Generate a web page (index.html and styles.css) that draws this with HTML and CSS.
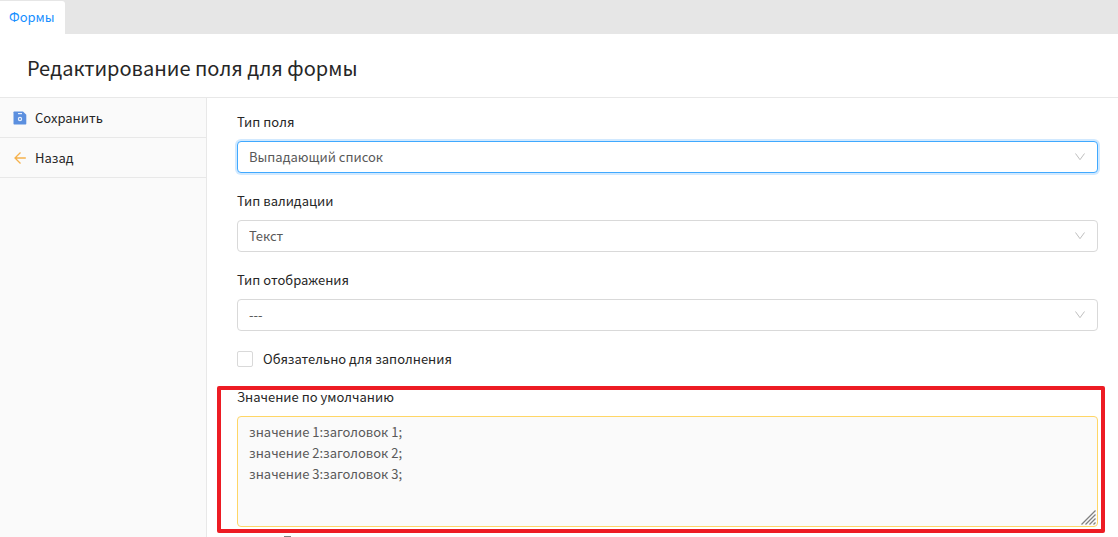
FILE: index.html
```html
<!DOCTYPE html>
<html lang="ru">
<head>
<meta charset="utf-8">
<meta name="viewport" content="width=device-width, initial-scale=1">
<title>Редактирование поля для формы</title>
<link rel="stylesheet" href="styles.css">
</head>
<body>
<nav class="tabs"><a class="tab" href="#forms">Формы</a></nav>
<header class="header"><h1 class="title">Редактирование поля для формы</h1></header>
<div class="layout">
  <aside class="sidebar">
    <button class="action" type="button">
      <svg class="action-icon" viewBox="0 0 14 14" aria-hidden="true">
        <path fill="#5b8fdf" d="M1.2 0.5H10L13.3 3.8V12.8Q13.3 13.5 12.6 13.5H1.2Q0.5 13.5 0.5 12.8V1.2Q0.5 0.5 1.2 0.5Z"/>
        <path fill="#e6effc" d="M5 2H9V3.2H5Z"/>
        <circle cx="7" cy="8" r="1.6" fill="none" stroke="#e6effc" stroke-width="1.2"/>
      </svg>
      Сохранить
    </button>
    <button class="action" type="button">
      <svg class="action-icon" viewBox="0 0 14 14" aria-hidden="true">
        <path fill="none" stroke="#f5b14c" stroke-width="1.3" d="M7.5 1.5L2 7L7.5 12.5M2 7H12.8"/>
      </svg>
      Назад
    </button>
  </aside>
  <main class="content">
    <form class="form">
      <div class="field">
        <label class="label" for="type">Тип поля</label>
        <div class="select-box">
          <select class="select select-active" id="type"><option>Выпадающий список</option></select>
          <svg class="chevron" viewBox="0 0 12 12" aria-hidden="true"><path d="M1.5 2.5L6 8.7L10.5 2.5"/></svg>
        </div>
      </div>
      <div class="field">
        <label class="label" for="validation">Тип валидации</label>
        <div class="select-box">
          <select class="select" id="validation"><option>Текст</option></select>
          <svg class="chevron" viewBox="0 0 12 12" aria-hidden="true"><path d="M1.5 2.5L6 8.7L10.5 2.5"/></svg>
        </div>
      </div>
      <div class="field">
        <label class="label" for="display">Тип отображения</label>
        <div class="select-box">
          <select class="select" id="display"><option>---</option></select>
          <svg class="chevron" viewBox="0 0 12 12" aria-hidden="true"><path d="M1.5 2.5L6 8.7L10.5 2.5"/></svg>
        </div>
      </div>
      <label class="check"><input class="checkbox" type="checkbox">Обязательно для заполнения</label>
      <div class="field highlighted">
        <label class="label" for="default">Значение по умолчанию</label>
        <div class="area-box">
          <textarea class="area" id="default">значение 1:заголовок 1;
значение 2:заголовок 2;
значение 3:заголовок 3;</textarea>
          <svg class="grip" viewBox="0 0 15 15" aria-hidden="true"><path d="M0.5 14.5L14.5 0.5M4.5 14.5L14.5 4.5M8.5 14.5L14.5 8.5M12.5 14.5L14.5 12.5"/></svg>
        </div>
      </div>
      <div class="next-row"><span class="next-mark"></span></div>
    </form>
  </main>
</div>
</body>
</html>
```
FILE: styles.css
```css
* { box-sizing: border-box; }

body {
  display: flex;
  flex-direction: column;
  height: 100vh;
  margin: 0;
  overflow: hidden;
  background: #fff;
  color: #262626;
  font: 13px/21px "Noto Sans CJK SC", "Noto Sans", sans-serif;
}

.tabs {
  display: flex;
  flex: none;
  height: 34px;
  padding-top: 1px;
  background: #e6e6e6;
}

.tab {
  display: flex;
  align-items: center;
  padding: 0 10px 2px 9px;
  border-radius: 0 3px 0 0;
  background: #fff;
  color: #1890ff;
  text-decoration: none;
}

.header {
  display: flex;
  flex: none;
  align-items: center;
  height: 64px;
  padding: 4px 27px 0;
  border-bottom: 1px solid #e8e8e8;
}

.title {
  margin: 0;
  font-size: 20px;
  font-weight: 400;
  line-height: 28px;
}

.layout {
  display: flex;
  flex: 1;
  min-height: 0;
}

.sidebar {
  flex: none;
  width: 207px;
  border-right: 1px solid #e8e8e8;
  background: #fafafa;
}

.action {
  display: flex;
  align-items: center;
  gap: 8px;
  width: 100%;
  height: 40px;
  padding: 0 13px;
  border: 0;
  border-bottom: 1px solid #e8e8e8;
  background: transparent;
  color: inherit;
  font: inherit;
}

.action-icon {
  width: 14px;
  height: 14px;
}

.content {
  flex: 1;
  min-width: 0;
  padding: 13px 20px 0 30px;
}

.form {
  display: flex;
  flex-direction: column;
  gap: 17px;
}

.field {
  display: flex;
  flex-direction: column;
  gap: 9px;
}

.label { align-self: flex-start; }

.select-box,
.area-box {
  display: flex;
  position: relative;
}

.select {
  width: 100%;
  height: 32px;
  padding: 0 32px 2px 11px;
  border: 1px solid #d9d9d9;
  border-radius: 4px;
  appearance: none;
  background: #fff;
  color: #595959;
  font: inherit;
}

.select-active {
  border-color: #40a9ff;
  box-shadow: 0 0 0 2px #d1e9ff;
}

.chevron {
  position: absolute;
  top: 10px;
  right: 12px;
  width: 12px;
  height: 12px;
  fill: none;
  stroke: #bfbfbf;
  pointer-events: none;
}

.check {
  display: flex;
  align-items: center;
  align-self: flex-start;
  gap: 10px;
}

.checkbox {
  width: 16px;
  height: 16px;
  margin: 0;
  border: 1px solid #d9d9d9;
  border-radius: 2px;
  appearance: none;
  background: #fff;
}

.highlighted { position: relative; }

.highlighted::after {
  position: absolute;
  inset: 0 -7px -6px -20px;
  border: 4px solid #ed1c24;
  border-radius: 2px;
  content: "";
  pointer-events: none;
}

.area {
  width: 100%;
  height: 111px;
  padding: 4px 11px;
  border: 1px solid #ffd666;
  border-radius: 4px;
  background: #fafafa;
  color: #595959;
  font: inherit;
  resize: none;
}

.grip {
  position: absolute;
  right: 2px;
  bottom: 2px;
  width: 15px;
  height: 15px;
  fill: none;
  stroke: #808080;
  stroke-width: 1.3;
  pointer-events: none;
}

.next-row {
  display: flex;
  margin-top: -8px;
  padding-left: 47px;
}

.next-mark {
  width: 7px;
  height: 1px;
  background: #808080;
}
```
